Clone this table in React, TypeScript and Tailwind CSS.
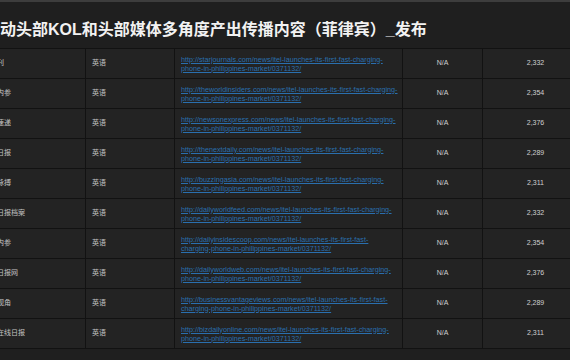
const rows = [
  { name: "星刊", site: "starjournals", views: "2,332" },
  { name: "界内参", site: "theworldinsiders", views: "2,354" },
  { name: "闻速递", site: "newsonexpress", views: "2,376" },
  { name: "次日报", site: "thenextdaily", views: "2,289" },
  { name: "洲脉搏", site: "buzzingasia", views: "2,311" },
  { name: "界日报档案", site: "dailyworldfeed", views: "2,332" },
  { name: "幕内参", site: "dailyinsidescoop", views: "2,354" },
  { name: "界日报网", site: "dailyworldweb", views: "2,376" },
  { name: "商视角", site: "businessvantageviews", views: "2,289" },
  { name: "商在线日报", site: "bizdailyonline", views: "2,311" },
]

export default function App() {
  return (
    <div className="w-[570px] h-[360px] overflow-hidden bg-[#1f1f1f] border-t-2 border-[#3d3d3d] font-['Liberation_Sans','Noto_Sans_CJK_SC',sans-serif]">
      <div className="-ml-[16px] w-[620px]">
        {/* title */}
        <div className="h-[46px] pt-[16px]">
          <h1 className="text-[16px] leading-[24px] font-bold text-[#f2f2f2] whitespace-nowrap">
            推动头部KOL和头部媒体多角度产出传播内容（菲律宾）_发布
          </h1>
        </div>

        {/* table */}
        <div className="grid grid-cols-[101px_88px_227px_79px_105px] gap-px bg-[#121212] py-px w-[604px]">
          {rows.map((r) => {
            const url = `http://${r.site}.com/news/itel-launches-its-first-fast-charging-phone-in-philippines-market/0371132/`
            return (
              <div key={r.site} className="contents">
                <div className="h-[29px] bg-[#232323] flex items-center pl-[6px] text-[7px] text-[#c4c4c4] whitespace-nowrap">
                  {r.name}
                </div>
                <div className="h-[29px] bg-[#232323] flex items-center pl-[6px] text-[7px] text-[#c4c4c4]">
                  英语
                </div>
                <div className="h-[29px] bg-[#232323] flex items-center pl-[6px]">
                  <a href="#" className="block w-[217px] text-[7.2px] leading-[9px] text-[#2a6fae] underline">
                    {url}
                  </a>
                </div>
                <div className="h-[29px] bg-[#232323] flex items-center justify-center text-[7px] text-[#cfcfcf]">
                  N/A
                </div>
                <div className="h-[29px] bg-[#232323] flex items-center justify-center text-[7px] text-[#cfcfcf]">
                  {r.views}
                </div>
              </div>
            )
          })}
        </div>
      </div>
    </div>
  )
}
